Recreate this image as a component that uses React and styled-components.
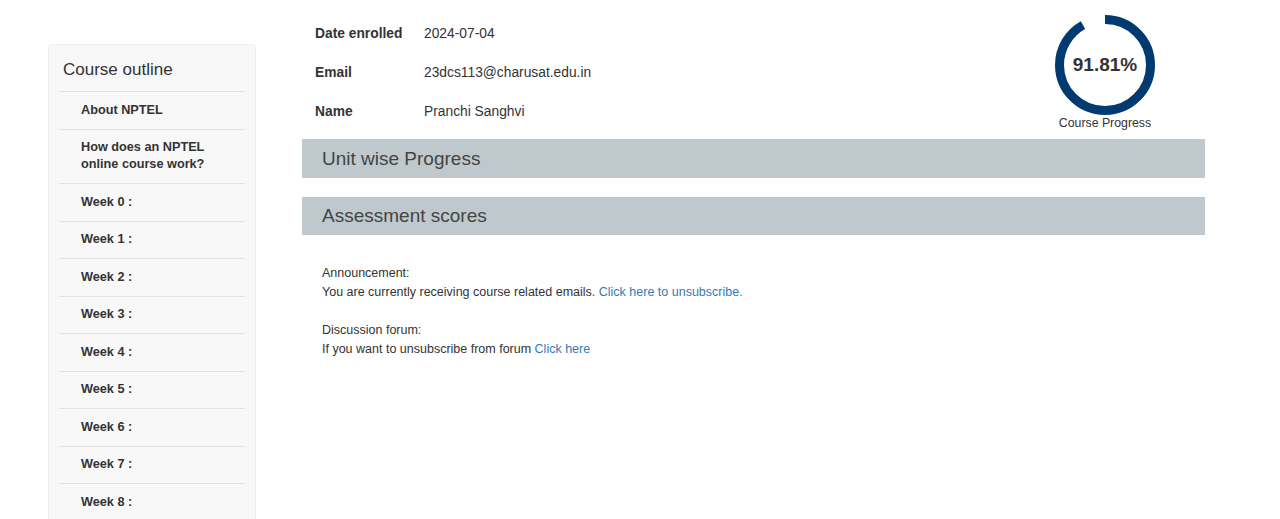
import React from "react";
import styled, { createGlobalStyle } from "styled-components";

const Global = createGlobalStyle`
  html, body { margin: 0; padding: 0; background: #fff; }
  body { font-family: "Liberation Sans", Arial, sans-serif; color: #333; }
`;

const Page = styled.div`
  display: flex;
  align-items: flex-start;
  padding-left: 48px;
  width: 1205px;
  box-sizing: border-box;
`;

const Sidebar = styled.nav`
  width: 208px;
  flex: none;
  margin-top: 44px;
  background: #f8f8f8;
  border: 1px solid #eeeeee;
  border-radius: 4px;
  box-sizing: border-box;
  padding: 0 10px 10px;
`;

const SideTitle = styled.div`
  font-size: 17px;
  line-height: 20px;
  color: #333;
  padding: 15px 4px 11px 4px;
`;

const OutlineList = styled.ul`
  list-style: none;
  margin: 0;
  padding: 0;
`;

const OutlineItem = styled.li`
  border-top: 1px solid #e3e3e3;
  padding: 9.75px 10px 9.75px 22px;
  font-size: 12.7px;
  line-height: 17px;
  font-weight: bold;
  color: #333;
`;

const Main = styled.main`
  flex: 1;
  margin-left: 46px;
  min-width: 0;
`;

const Header = styled.div`
  display: flex;
  justify-content: space-between;
  align-items: flex-start;
  padding-top: 14px;
`;

const InfoTable = styled.div`
  display: grid;
  grid-template-columns: 109px auto;
  grid-auto-rows: 39px;
  align-items: center;
  padding-left: 13px;
`;

const Label = styled.div`
  font-weight: bold;
  color: #333;
  font-size: 13.8px;
`;

const Value = styled.div`
  color: #333;
  font-size: 13.8px;
`;

const ProgressBox = styled.div`
  width: 200px;
  display: flex;
  flex-direction: column;
  align-items: center;
  margin-top: 1px;
`;

const Ring = styled.div`
  position: relative;
  width: 100px;
  height: 100px;
`;

const RingText = styled.div`
  position: absolute;
  inset: 0;
  display: flex;
  align-items: center;
  justify-content: center;
  font-size: 19px;
  font-weight: bold;
  color: #333;
`;

const RingLabel = styled.div`
  font-size: 12.3px;
  line-height: 16px;
  color: #333;
`;

const SectionBar = styled.div`
  background: #bfc8cd;
  height: ${(p) => p.$h}px;
  margin-top: ${(p) => p.$mt}px;
  display: flex;
  align-items: center;
  padding-left: 20px;
  font-size: 19px;
  color: #444;
`;

const Notices = styled.div`
  padding: 29px 20px 0;
  font-size: 12.5px;
  line-height: 19px;
  color: #333;
`;

const Notice = styled.p`
  margin: 0 0 19px;
`;

const Link = styled.a`
  color: #337ab7;
  text-decoration: none;
`;

const items = [
  "About NPTEL",
  "How does an NPTEL online course work?",
  ...Array.from({ length: 9 }, (_, i) => `Week ${i} :`),
];

function ProgressRing({ value }) {
  const r = 45.5;
  const c = 2 * Math.PI * r;
  return (
    <Ring>
      <svg width="100" height="100" viewBox="0 0 100 100">
        <circle
          cx="50"
          cy="50"
          r={r}
          fill="none"
          stroke="#003a70"
          strokeWidth="9"
          strokeDasharray={`${(c * value) / 100} ${c}`}
          transform="rotate(-90 50 50)"
        />
      </svg>
      <RingText>{value}%</RingText>
    </Ring>
  );
}

export default function App() {
  return (
    <>
      <Global />
      <Page>
        <Sidebar>
          <SideTitle>Course outline</SideTitle>
          <OutlineList>
            {items.map((t) => (
              <OutlineItem key={t}>{t}</OutlineItem>
            ))}
          </OutlineList>
        </Sidebar>
        <Main>
          <Header>
            <InfoTable>
              <Label>Date enrolled</Label>
              <Value>2024-07-04</Value>
              <Label>Email</Label>
              <Value>23dcs113@charusat.edu.in</Value>
              <Label>Name</Label>
              <Value>Pranchi Sanghvi</Value>
            </InfoTable>
            <ProgressBox>
              <ProgressRing value={91.81} />
              <RingLabel>Course Progress</RingLabel>
            </ProgressBox>
          </Header>
          <SectionBar $h={39} $mt={8}>Unit wise Progress</SectionBar>
          <SectionBar $h={38} $mt={19}>Assessment scores</SectionBar>
          <Notices>
            <Notice>
              Announcement:
              <br />
              You are currently receiving course related emails.{" "}
              <Link href="#">Click here to unsubscribe.</Link>
            </Notice>
            <Notice>
              Discussion forum:
              <br />
              If you want to unsubscribe from forum <Link href="#">Click here</Link>
            </Notice>
          </Notices>
        </Main>
      </Page>
    </>
  );
}
